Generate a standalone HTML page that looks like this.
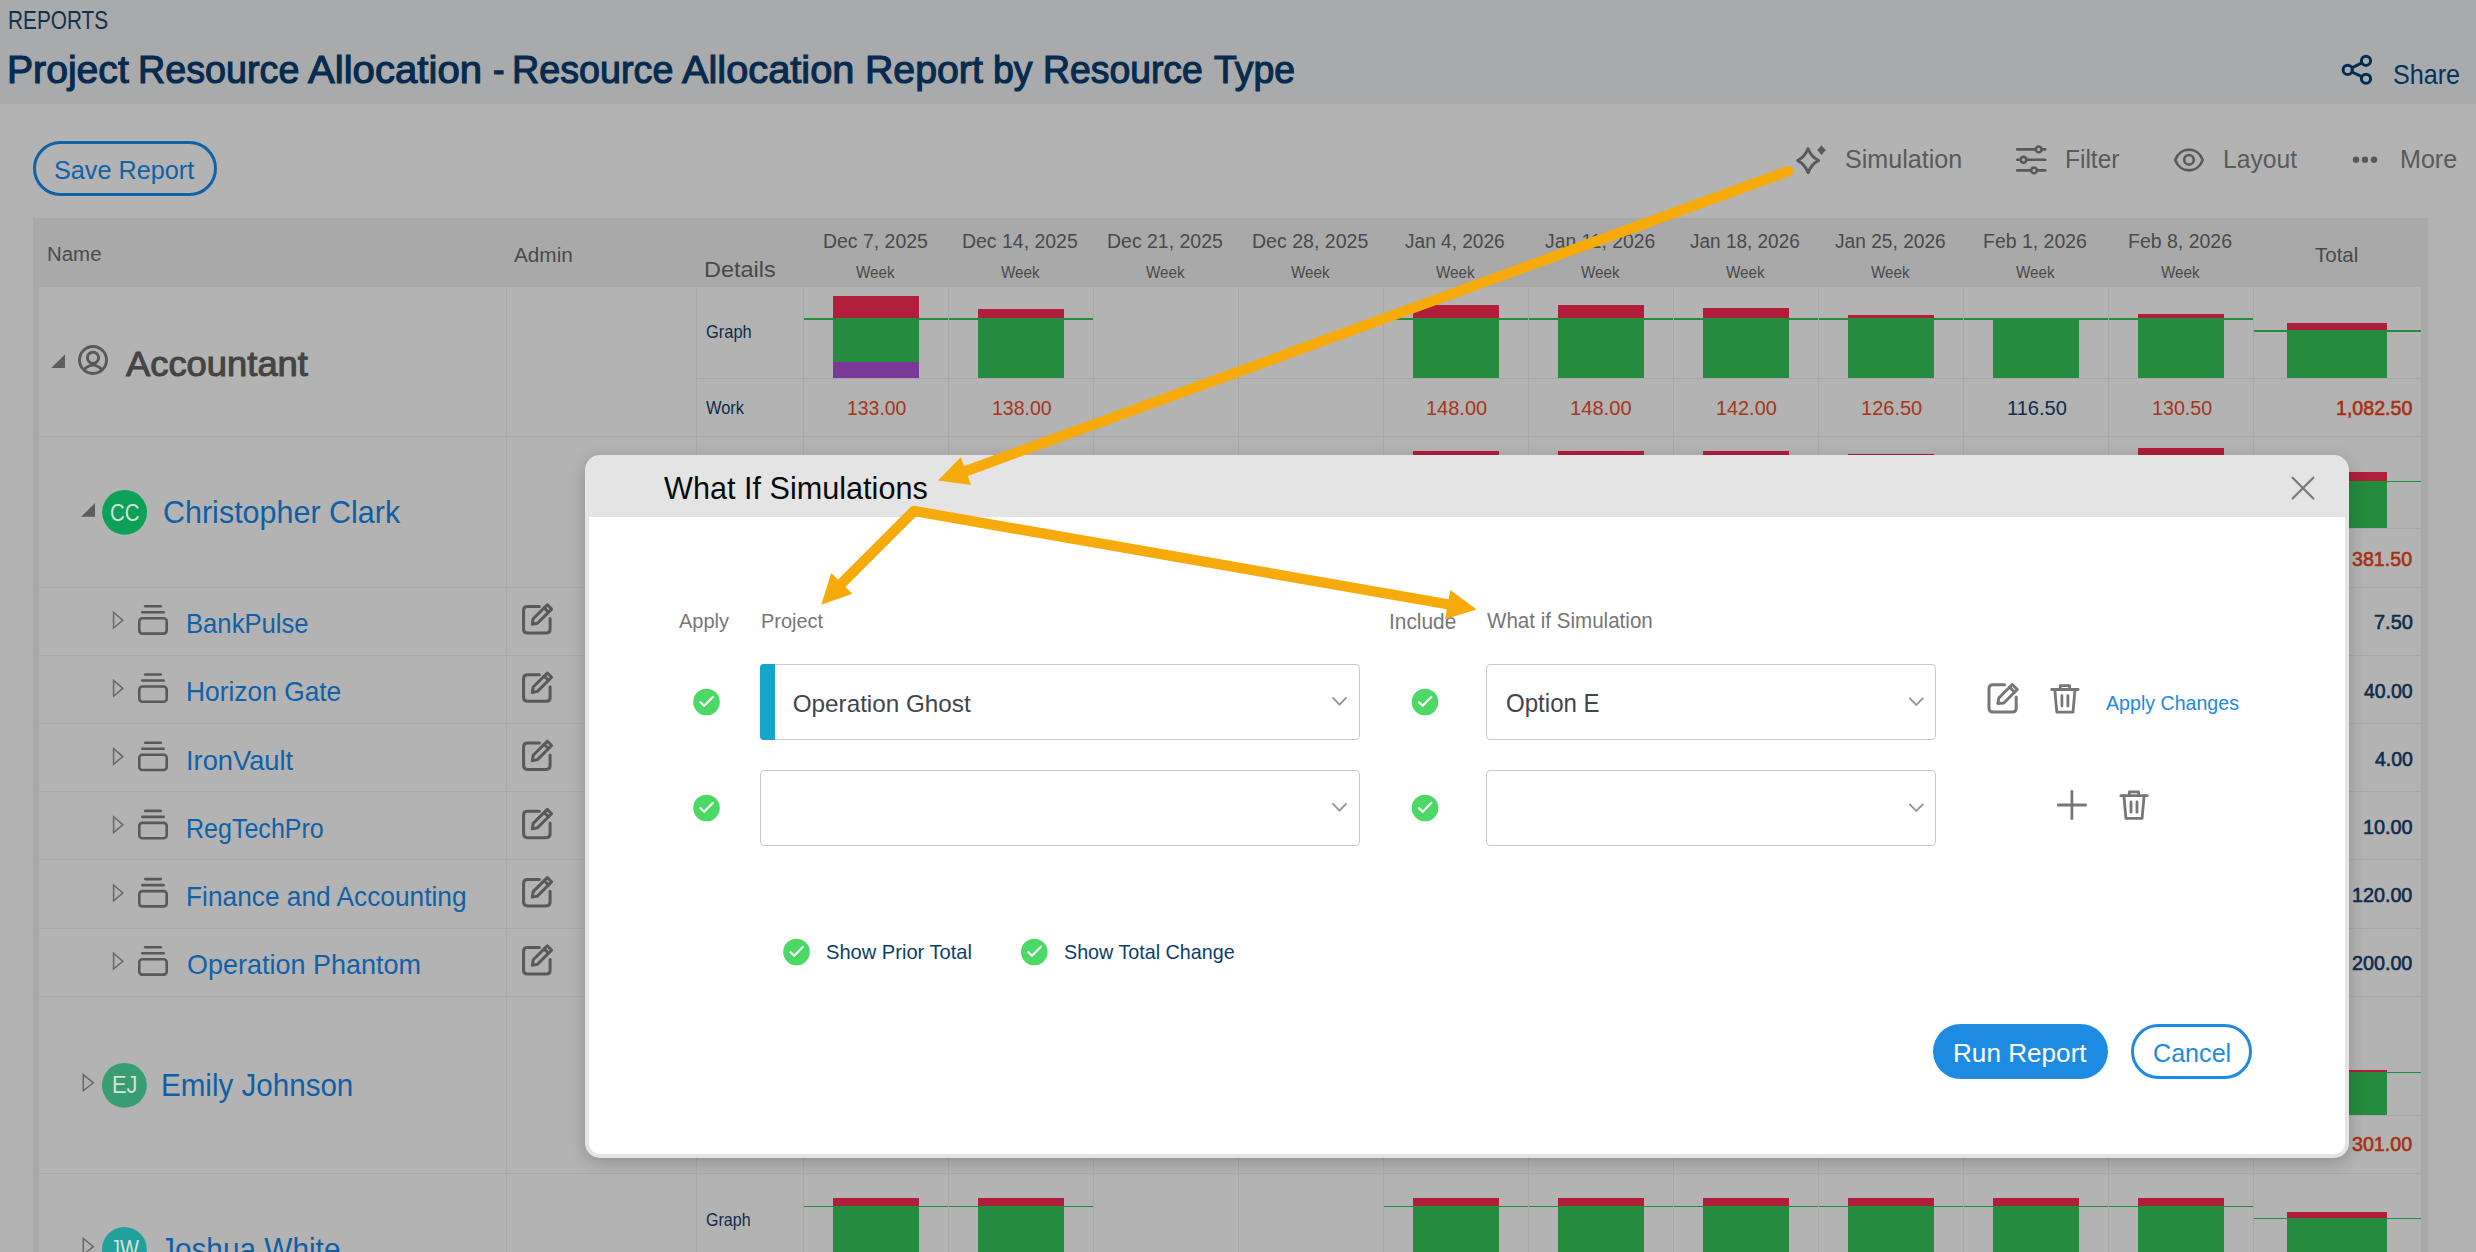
<!DOCTYPE html>
<html><head><meta charset="utf-8"><style>
html,body{margin:0;padding:0;}
body{width:2476px;height:1252px;overflow:hidden;position:relative;background:#b3b3b3;font-family:"Liberation Sans",sans-serif;}
.t{position:absolute;white-space:nowrap;transform-origin:0 0;}
.ov{position:absolute;left:0;top:0;}
</style></head><body>
<div style="position:absolute;left:0px;top:0px;width:2476px;height:104px;background:#a9aaac"></div><div style="position:absolute;left:33px;top:141px;width:184px;height:55px;box-sizing:border-box;border:3px solid #0f62a6;border-radius:28px"></div><div style="position:absolute;left:33px;top:218px;width:2395px;height:1100px;background:#a9a9a9"></div><div style="position:absolute;left:39px;top:287px;width:2382px;height:1000px;background:#b3b3b3"></div><div style="position:absolute;left:506px;top:287px;width:1px;height:1000px;background:#a8a8a8"></div><div style="position:absolute;left:696px;top:287px;width:1px;height:1000px;background:#a8a8a8"></div><div style="position:absolute;left:803px;top:287px;width:1px;height:1000px;background:#a8a8a8"></div><div style="position:absolute;left:948px;top:287px;width:1px;height:1000px;background:#a8a8a8"></div><div style="position:absolute;left:1093px;top:287px;width:1px;height:1000px;background:#a8a8a8"></div><div style="position:absolute;left:1238px;top:287px;width:1px;height:1000px;background:#a8a8a8"></div><div style="position:absolute;left:1383px;top:287px;width:1px;height:1000px;background:#a8a8a8"></div><div style="position:absolute;left:1528px;top:287px;width:1px;height:1000px;background:#a8a8a8"></div><div style="position:absolute;left:1673px;top:287px;width:1px;height:1000px;background:#a8a8a8"></div><div style="position:absolute;left:1818px;top:287px;width:1px;height:1000px;background:#a8a8a8"></div><div style="position:absolute;left:1963px;top:287px;width:1px;height:1000px;background:#a8a8a8"></div><div style="position:absolute;left:2108px;top:287px;width:1px;height:1000px;background:#a8a8a8"></div><div style="position:absolute;left:2253px;top:287px;width:1px;height:1000px;background:#a8a8a8"></div><div style="position:absolute;left:39px;top:436px;width:2382px;height:1px;background:#a8a8a8"></div><div style="position:absolute;left:39px;top:587px;width:2382px;height:1px;background:#a8a8a8"></div><div style="position:absolute;left:39px;top:655px;width:2382px;height:1px;background:#a8a8a8"></div><div style="position:absolute;left:39px;top:723px;width:2382px;height:1px;background:#a8a8a8"></div><div style="position:absolute;left:39px;top:791px;width:2382px;height:1px;background:#a8a8a8"></div><div style="position:absolute;left:39px;top:859px;width:2382px;height:1px;background:#a8a8a8"></div><div style="position:absolute;left:39px;top:928px;width:2382px;height:1px;background:#a8a8a8"></div><div style="position:absolute;left:39px;top:996px;width:2382px;height:1px;background:#a8a8a8"></div><div style="position:absolute;left:39px;top:1173px;width:2382px;height:1px;background:#a8a8a8"></div><div style="position:absolute;left:697px;top:378px;width:1724px;height:1px;background:#a8a8a8"></div><div style="position:absolute;left:697px;top:528px;width:1724px;height:1px;background:#a8a8a8"></div><div style="position:absolute;left:697px;top:1115px;width:1724px;height:1px;background:#a8a8a8"></div><div style="position:absolute;left:833px;top:296px;width:86px;height:22px;background:#b01e3a"></div><div style="position:absolute;left:833px;top:318px;width:86px;height:44px;background:#248b3f"></div><div style="position:absolute;left:833px;top:362px;width:86px;height:16px;background:#7a3899"></div><div style="position:absolute;left:978px;top:309px;width:86px;height:9px;background:#b01e3a"></div><div style="position:absolute;left:978px;top:318px;width:86px;height:60px;background:#248b3f"></div><div style="position:absolute;left:1413px;top:304.7px;width:86px;height:13.300000000000011px;background:#b01e3a"></div><div style="position:absolute;left:1413px;top:318px;width:86px;height:60px;background:#248b3f"></div><div style="position:absolute;left:1558px;top:304.7px;width:86px;height:13.300000000000011px;background:#b01e3a"></div><div style="position:absolute;left:1558px;top:318px;width:86px;height:60px;background:#248b3f"></div><div style="position:absolute;left:1703px;top:307.8px;width:86px;height:10.199999999999989px;background:#b01e3a"></div><div style="position:absolute;left:1703px;top:318px;width:86px;height:60px;background:#248b3f"></div><div style="position:absolute;left:1848px;top:314.9px;width:86px;height:3.1000000000000227px;background:#b01e3a"></div><div style="position:absolute;left:1848px;top:318px;width:86px;height:60px;background:#248b3f"></div><div style="position:absolute;left:1993px;top:318px;width:86px;height:60px;background:#248b3f"></div><div style="position:absolute;left:2138px;top:313.6px;width:86px;height:4.399999999999977px;background:#b01e3a"></div><div style="position:absolute;left:2138px;top:318px;width:86px;height:60px;background:#248b3f"></div><div style="position:absolute;left:804px;top:317.5px;width:144px;height:2px;background:#248b3f"></div><div style="position:absolute;left:949px;top:317.5px;width:144px;height:2px;background:#248b3f"></div><div style="position:absolute;left:1384px;top:317.5px;width:144px;height:2px;background:#248b3f"></div><div style="position:absolute;left:1529px;top:317.5px;width:144px;height:2px;background:#248b3f"></div><div style="position:absolute;left:1674px;top:317.5px;width:144px;height:2px;background:#248b3f"></div><div style="position:absolute;left:1819px;top:317.5px;width:144px;height:2px;background:#248b3f"></div><div style="position:absolute;left:1964px;top:317.5px;width:144px;height:2px;background:#248b3f"></div><div style="position:absolute;left:2109px;top:317.5px;width:144px;height:2px;background:#248b3f"></div><div style="position:absolute;left:2287px;top:322.9px;width:100px;height:7.100000000000023px;background:#b01e3a"></div><div style="position:absolute;left:2287px;top:330px;width:100px;height:48px;background:#248b3f"></div><div style="position:absolute;left:2254px;top:329.5px;width:167px;height:2px;background:#248b3f"></div><div style="position:absolute;left:1413px;top:451px;width:86px;height:19px;background:#b01e3a"></div><div style="position:absolute;left:1413px;top:470px;width:86px;height:58px;background:#248b3f"></div><div style="position:absolute;left:1558px;top:451px;width:86px;height:19px;background:#b01e3a"></div><div style="position:absolute;left:1558px;top:470px;width:86px;height:58px;background:#248b3f"></div><div style="position:absolute;left:1703px;top:451px;width:86px;height:19px;background:#b01e3a"></div><div style="position:absolute;left:1703px;top:470px;width:86px;height:58px;background:#248b3f"></div><div style="position:absolute;left:1848px;top:453.5px;width:86px;height:16.5px;background:#b01e3a"></div><div style="position:absolute;left:1848px;top:470px;width:86px;height:58px;background:#248b3f"></div><div style="position:absolute;left:2138px;top:447.7px;width:86px;height:22.30000000000001px;background:#b01e3a"></div><div style="position:absolute;left:2138px;top:470px;width:86px;height:58px;background:#248b3f"></div><div style="position:absolute;left:2287px;top:472px;width:100px;height:9px;background:#b01e3a"></div><div style="position:absolute;left:2287px;top:481px;width:100px;height:47px;background:#248b3f"></div><div style="position:absolute;left:2254px;top:481px;width:167px;height:1px;background:#248b3f"></div><div style="position:absolute;left:2287px;top:1069.7px;width:100px;height:2.599999999999909px;background:#b01e3a"></div><div style="position:absolute;left:2287px;top:1072.3px;width:100px;height:42.700000000000045px;background:#248b3f"></div><div style="position:absolute;left:2254px;top:1072px;width:167px;height:1px;background:#248b3f"></div><div style="position:absolute;left:833px;top:1197.5px;width:86px;height:8.299999999999955px;background:#b01e3a"></div><div style="position:absolute;left:833px;top:1205.8px;width:86px;height:94.20000000000005px;background:#248b3f"></div><div style="position:absolute;left:978px;top:1197.5px;width:86px;height:8.299999999999955px;background:#b01e3a"></div><div style="position:absolute;left:978px;top:1205.8px;width:86px;height:94.20000000000005px;background:#248b3f"></div><div style="position:absolute;left:1413px;top:1197.5px;width:86px;height:8.299999999999955px;background:#b01e3a"></div><div style="position:absolute;left:1413px;top:1205.8px;width:86px;height:94.20000000000005px;background:#248b3f"></div><div style="position:absolute;left:1558px;top:1197.5px;width:86px;height:8.299999999999955px;background:#b01e3a"></div><div style="position:absolute;left:1558px;top:1205.8px;width:86px;height:94.20000000000005px;background:#248b3f"></div><div style="position:absolute;left:1703px;top:1197.5px;width:86px;height:8.299999999999955px;background:#b01e3a"></div><div style="position:absolute;left:1703px;top:1205.8px;width:86px;height:94.20000000000005px;background:#248b3f"></div><div style="position:absolute;left:1848px;top:1197.5px;width:86px;height:8.299999999999955px;background:#b01e3a"></div><div style="position:absolute;left:1848px;top:1205.8px;width:86px;height:94.20000000000005px;background:#248b3f"></div><div style="position:absolute;left:1993px;top:1197.5px;width:86px;height:8.299999999999955px;background:#b01e3a"></div><div style="position:absolute;left:1993px;top:1205.8px;width:86px;height:94.20000000000005px;background:#248b3f"></div><div style="position:absolute;left:2138px;top:1197.5px;width:86px;height:8.299999999999955px;background:#b01e3a"></div><div style="position:absolute;left:2138px;top:1205.8px;width:86px;height:94.20000000000005px;background:#248b3f"></div><div style="position:absolute;left:804px;top:1205.5px;width:144px;height:1.5px;background:#248b3f"></div><div style="position:absolute;left:949px;top:1205.5px;width:144px;height:1.5px;background:#248b3f"></div><div style="position:absolute;left:1384px;top:1205.5px;width:144px;height:1.5px;background:#248b3f"></div><div style="position:absolute;left:1529px;top:1205.5px;width:144px;height:1.5px;background:#248b3f"></div><div style="position:absolute;left:1674px;top:1205.5px;width:144px;height:1.5px;background:#248b3f"></div><div style="position:absolute;left:1819px;top:1205.5px;width:144px;height:1.5px;background:#248b3f"></div><div style="position:absolute;left:1964px;top:1205.5px;width:144px;height:1.5px;background:#248b3f"></div><div style="position:absolute;left:2109px;top:1205.5px;width:144px;height:1.5px;background:#248b3f"></div><div style="position:absolute;left:2287px;top:1211.8px;width:100px;height:5.7999999999999545px;background:#b01e3a"></div><div style="position:absolute;left:2287px;top:1217.6px;width:100px;height:82.40000000000009px;background:#248b3f"></div><div style="position:absolute;left:2254px;top:1217.5px;width:167px;height:1px;background:#248b3f"></div>
<svg class="ov" width="2476" height="1252" viewBox="0 0 2476 1252"><g fill="none" stroke="#002c52" stroke-width="3"><circle cx="2366" cy="60.8" r="4.6"/><circle cx="2347.7" cy="69.9" r="4.6"/><circle cx="2366" cy="78.75" r="4.6"/><line x1="2351.8" y1="67.8" x2="2361.9" y2="62.9"/><line x1="2351.8" y1="72" x2="2361.9" y2="76.7"/></g><path d="M1808 148.8 Q1811.2 156.8 1818.6 160.5 Q1811.2 164.4 1808.1 172.6 Q1804.9 164.4 1797.7 160.5 Q1804.9 156.8 1808 148.8Z" fill="none" stroke="#595959" stroke-width="3" stroke-linejoin="round"/><path d="M1821.5 145.2 Q1823.4 147.9 1825.9 149.9 Q1823.4 152.2 1821.5 155.2 Q1819.6 152.2 1817.1 149.9 Q1819.6 147.9 1821.5 145.2Z" fill="#595959"/><g stroke="#595959" stroke-width="2.6" stroke-linecap="round" fill="none"><line x1="2017.2" y1="149.4" x2="2035.6" y2="149.4"/><line x1="2041.8" y1="149.4" x2="2045.2" y2="149.4"/><circle cx="2038.7" cy="149.4" r="2.9"/><line x1="2017.2" y1="159.8" x2="2020.4" y2="159.8"/><line x1="2026.6" y1="159.8" x2="2045.2" y2="159.8"/><circle cx="2023.5" cy="159.8" r="2.9"/><line x1="2017.2" y1="170.4" x2="2030.9" y2="170.4"/><line x1="2037.1" y1="170.4" x2="2045.2" y2="170.4"/><circle cx="2034" cy="170.4" r="2.9"/></g><g stroke="#595959" stroke-width="2.6" fill="none"><path d="M2175.3 160 C2180 146.2 2198 146.2 2202.7 160 C2198 173.8 2180 173.8 2175.3 160Z" stroke-linejoin="round"/><circle cx="2189" cy="159.8" r="4.8"/></g><circle cx="2356" cy="159.7" r="3.2" fill="#595959"/><circle cx="2365" cy="159.7" r="3.2" fill="#595959"/><circle cx="2374" cy="159.7" r="3.2" fill="#595959"/><path d="M51.2 368 L65 354.2 L65 368Z" fill="#5d5d5d"/><g fill="none" stroke="#595959" stroke-width="2.9"><circle cx="93" cy="360" r="13.5"/><circle cx="93" cy="357.8" r="5.6"/><path d="M84 369.8 Q93 360.5 102 369.8"/></g><path d="M81 516.8 L95 503.1 L95 516.8Z" fill="#5d5d5d"/><circle cx="124.6" cy="512.3" r="22.4" fill="#0ba257"/><path d="M113.6 612.2 L122.8 620.2 L113.6 628.0Z" fill="none" stroke="#686868" stroke-width="1.5" stroke-linejoin="miter"/><g fill="none" stroke="#595959" stroke-width="2.6" stroke-linecap="round"><rect x="139.3" y="618.3" width="27.4" height="15.3" rx="3"/><line x1="142.3" y1="612.3" x2="163.7" y2="612.3"/><line x1="145.2" y1="606.3" x2="160.8" y2="606.3"/></g><g fill="none" stroke="#595959" stroke-width="3" stroke-linecap="round" stroke-linejoin="round" transform="translate(0 0.0)"><path d="M539.4 606.6 H527.5 Q523.6 606.6 523.6 610.5 V629.2 Q523.6 633.1 527.5 633.1 H546.2 Q550.1 633.1 550.1 629.2 V618.5"/><path d="M532.3 624.3 L533.2 618.8 L547.3 604.8 L551.6 609.1 L537.5 623.2 Z"/><line x1="544.2" y1="607.9" x2="548.5" y2="612.2"/></g><path d="M113.6 680.4 L122.8 688.4 L113.6 696.2Z" fill="none" stroke="#686868" stroke-width="1.5" stroke-linejoin="miter"/><g fill="none" stroke="#595959" stroke-width="2.6" stroke-linecap="round"><rect x="139.3" y="686.5" width="27.4" height="15.3" rx="3"/><line x1="142.3" y1="680.5" x2="163.7" y2="680.5"/><line x1="145.2" y1="674.5" x2="160.8" y2="674.5"/></g><g fill="none" stroke="#595959" stroke-width="3" stroke-linecap="round" stroke-linejoin="round" transform="translate(0 68.2)"><path d="M539.4 606.6 H527.5 Q523.6 606.6 523.6 610.5 V629.2 Q523.6 633.1 527.5 633.1 H546.2 Q550.1 633.1 550.1 629.2 V618.5"/><path d="M532.3 624.3 L533.2 618.8 L547.3 604.8 L551.6 609.1 L537.5 623.2 Z"/><line x1="544.2" y1="607.9" x2="548.5" y2="612.2"/></g><path d="M113.6 748.6 L122.8 756.6 L113.6 764.4Z" fill="none" stroke="#686868" stroke-width="1.5" stroke-linejoin="miter"/><g fill="none" stroke="#595959" stroke-width="2.6" stroke-linecap="round"><rect x="139.3" y="754.7" width="27.4" height="15.3" rx="3"/><line x1="142.3" y1="748.7" x2="163.7" y2="748.7"/><line x1="145.2" y1="742.7" x2="160.8" y2="742.7"/></g><g fill="none" stroke="#595959" stroke-width="3" stroke-linecap="round" stroke-linejoin="round" transform="translate(0 136.4)"><path d="M539.4 606.6 H527.5 Q523.6 606.6 523.6 610.5 V629.2 Q523.6 633.1 527.5 633.1 H546.2 Q550.1 633.1 550.1 629.2 V618.5"/><path d="M532.3 624.3 L533.2 618.8 L547.3 604.8 L551.6 609.1 L537.5 623.2 Z"/><line x1="544.2" y1="607.9" x2="548.5" y2="612.2"/></g><path d="M113.6 816.8 L122.8 824.8 L113.6 832.6Z" fill="none" stroke="#686868" stroke-width="1.5" stroke-linejoin="miter"/><g fill="none" stroke="#595959" stroke-width="2.6" stroke-linecap="round"><rect x="139.3" y="822.9" width="27.4" height="15.3" rx="3"/><line x1="142.3" y1="816.9" x2="163.7" y2="816.9"/><line x1="145.2" y1="810.9" x2="160.8" y2="810.9"/></g><g fill="none" stroke="#595959" stroke-width="3" stroke-linecap="round" stroke-linejoin="round" transform="translate(0 204.6)"><path d="M539.4 606.6 H527.5 Q523.6 606.6 523.6 610.5 V629.2 Q523.6 633.1 527.5 633.1 H546.2 Q550.1 633.1 550.1 629.2 V618.5"/><path d="M532.3 624.3 L533.2 618.8 L547.3 604.8 L551.6 609.1 L537.5 623.2 Z"/><line x1="544.2" y1="607.9" x2="548.5" y2="612.2"/></g><path d="M113.6 885.0 L122.8 893.0 L113.6 900.8Z" fill="none" stroke="#686868" stroke-width="1.5" stroke-linejoin="miter"/><g fill="none" stroke="#595959" stroke-width="2.6" stroke-linecap="round"><rect x="139.3" y="891.1" width="27.4" height="15.3" rx="3"/><line x1="142.3" y1="885.1" x2="163.7" y2="885.1"/><line x1="145.2" y1="879.1" x2="160.8" y2="879.1"/></g><g fill="none" stroke="#595959" stroke-width="3" stroke-linecap="round" stroke-linejoin="round" transform="translate(0 272.8)"><path d="M539.4 606.6 H527.5 Q523.6 606.6 523.6 610.5 V629.2 Q523.6 633.1 527.5 633.1 H546.2 Q550.1 633.1 550.1 629.2 V618.5"/><path d="M532.3 624.3 L533.2 618.8 L547.3 604.8 L551.6 609.1 L537.5 623.2 Z"/><line x1="544.2" y1="607.9" x2="548.5" y2="612.2"/></g><path d="M113.6 953.2 L122.8 961.2 L113.6 969.0Z" fill="none" stroke="#686868" stroke-width="1.5" stroke-linejoin="miter"/><g fill="none" stroke="#595959" stroke-width="2.6" stroke-linecap="round"><rect x="139.3" y="959.3" width="27.4" height="15.3" rx="3"/><line x1="142.3" y1="953.3" x2="163.7" y2="953.3"/><line x1="145.2" y1="947.3" x2="160.8" y2="947.3"/></g><g fill="none" stroke="#595959" stroke-width="3" stroke-linecap="round" stroke-linejoin="round" transform="translate(0 341.0)"><path d="M539.4 606.6 H527.5 Q523.6 606.6 523.6 610.5 V629.2 Q523.6 633.1 527.5 633.1 H546.2 Q550.1 633.1 550.1 629.2 V618.5"/><path d="M532.3 624.3 L533.2 618.8 L547.3 604.8 L551.6 609.1 L537.5 623.2 Z"/><line x1="544.2" y1="607.9" x2="548.5" y2="612.2"/></g><path d="M83.3 1074.6 L93.3 1082.8 L83.3 1090.8Z" fill="none" stroke="#686868" stroke-width="1.5"/><circle cx="124.4" cy="1085.3" r="22.4" fill="#389d71"/><path d="M83.3 1238.5 L93.3 1246.7 L83.3 1254.7Z" fill="none" stroke="#686868" stroke-width="1.5"/><circle cx="124.4" cy="1249.4" r="22.4" fill="#22a09c"/></svg>
<div class="t" style="left:7.73px;top:9.49px;font-size:24.85px;line-height:24.85px;color:#10304f;transform:scaleX(0.8371);">REPORTS</div>
<div class="t" style="left:6.57px;top:51.25px;font-size:38.80px;line-height:38.80px;color:#062b4f;-webkit-text-stroke:1.16px #062b4f;transform:scaleX(1.0087);">Project</div>
<div class="t" style="left:138.48px;top:51.25px;font-size:38.80px;line-height:38.80px;color:#062b4f;-webkit-text-stroke:1.16px #062b4f;transform:scaleX(0.9717);">Resource</div>
<div class="t" style="left:308.20px;top:51.25px;font-size:38.80px;line-height:38.80px;color:#062b4f;-webkit-text-stroke:1.16px #062b4f;transform:scaleX(1.0345);">Allocation</div>
<div class="t" style="left:492.51px;top:51.25px;font-size:38.80px;line-height:38.80px;color:#062b4f;-webkit-text-stroke:1.16px #062b4f;transform:scaleX(0.8909);">-</div>
<div class="t" style="left:511.68px;top:51.25px;font-size:38.80px;line-height:38.80px;color:#062b4f;-webkit-text-stroke:1.16px #062b4f;transform:scaleX(0.9717);">Resource</div>
<div class="t" style="left:682.30px;top:51.25px;font-size:38.80px;line-height:38.80px;color:#062b4f;-webkit-text-stroke:1.16px #062b4f;transform:scaleX(1.0249);">Allocation</div>
<div class="t" style="left:864.66px;top:51.25px;font-size:38.80px;line-height:38.80px;color:#062b4f;-webkit-text-stroke:1.16px #062b4f;transform:scaleX(1.0117);">Report</div>
<div class="t" style="left:993.47px;top:51.25px;font-size:38.80px;line-height:38.80px;color:#062b4f;-webkit-text-stroke:1.16px #062b4f;transform:scaleX(0.9652);">by</div>
<div class="t" style="left:1043.41px;top:51.25px;font-size:38.80px;line-height:38.80px;color:#062b4f;-webkit-text-stroke:1.16px #062b4f;transform:scaleX(0.9624);">Resource</div>
<div class="t" style="left:1213.50px;top:51.25px;font-size:38.80px;line-height:38.80px;color:#062b4f;-webkit-text-stroke:1.16px #062b4f;transform:scaleX(0.9632);">Type</div>
<div class="t" style="left:2393.49px;top:60.85px;font-size:27.47px;line-height:27.47px;color:#00345c;transform:scaleX(0.9136);">Share</div>
<div class="t" style="left:54.04px;top:156.86px;font-size:26.16px;line-height:26.16px;color:#0f62a6;transform:scaleX(0.9647);">Save Report</div>
<div class="t" style="left:1845.41px;top:147.37px;font-size:25.44px;line-height:25.44px;color:#5a5a5a;transform:scaleX(0.9878);">Simulation</div>
<div class="t" style="left:2065.07px;top:147.37px;font-size:25.44px;line-height:25.44px;color:#5a5a5a;transform:scaleX(0.9627);">Filter</div>
<div class="t" style="left:2223.06px;top:147.37px;font-size:25.44px;line-height:25.44px;color:#5a5a5a;transform:scaleX(0.9689);">Layout</div>
<div class="t" style="left:2400.03px;top:147.37px;font-size:25.44px;line-height:25.44px;color:#5a5a5a;transform:scaleX(0.9855);">More</div>
<div class="t" style="left:46.77px;top:245.48px;font-size:19.91px;line-height:19.91px;color:#4a4a4a;transform:scaleX(1.0264);">Name</div>
<div class="t" style="left:514.30px;top:244.73px;font-size:20.64px;line-height:20.64px;color:#4a4a4a;transform:scaleX(1.0053);">Admin</div>
<div class="t" style="left:703.89px;top:259.44px;font-size:21.22px;line-height:21.22px;color:#4a4a4a;transform:scaleX(1.1067);">Details</div>
<div class="t" style="left:822.62px;top:232.05px;font-size:19.91px;line-height:19.91px;color:#4a4a4a;transform:scaleX(0.9767);">Dec 7, 2025</div>
<div class="t" style="left:856.00px;top:264.00px;font-size:17.15px;line-height:17.15px;color:#4a4a4a;transform:scaleX(0.8877);">Week</div>
<div class="t" style="left:962.02px;top:232.05px;font-size:19.91px;line-height:19.91px;color:#4a4a4a;transform:scaleX(0.9775);">Dec 14, 2025</div>
<div class="t" style="left:1001.00px;top:264.00px;font-size:17.15px;line-height:17.15px;color:#4a4a4a;transform:scaleX(0.8877);">Week</div>
<div class="t" style="left:1107.02px;top:232.05px;font-size:19.91px;line-height:19.91px;color:#4a4a4a;transform:scaleX(0.9783);">Dec 21, 2025</div>
<div class="t" style="left:1146.00px;top:264.00px;font-size:17.15px;line-height:17.15px;color:#4a4a4a;transform:scaleX(0.8877);">Week</div>
<div class="t" style="left:1252.02px;top:232.05px;font-size:19.91px;line-height:19.91px;color:#4a4a4a;transform:scaleX(0.9817);">Dec 28, 2025</div>
<div class="t" style="left:1291.00px;top:264.00px;font-size:17.15px;line-height:17.15px;color:#4a4a4a;transform:scaleX(0.8877);">Week</div>
<div class="t" style="left:1405.20px;top:232.05px;font-size:19.91px;line-height:19.91px;color:#4a4a4a;transform:scaleX(0.9580);">Jan 4, 2026</div>
<div class="t" style="left:1436.00px;top:264.00px;font-size:17.15px;line-height:17.15px;color:#4a4a4a;transform:scaleX(0.8877);">Week</div>
<div class="t" style="left:1544.70px;top:232.05px;font-size:19.91px;line-height:19.91px;color:#4a4a4a;transform:scaleX(0.9704);">Jan 11, 2026</div>
<div class="t" style="left:1581.00px;top:264.00px;font-size:17.15px;line-height:17.15px;color:#4a4a4a;transform:scaleX(0.8877);">Week</div>
<div class="t" style="left:1689.90px;top:232.05px;font-size:19.91px;line-height:19.91px;color:#4a4a4a;transform:scaleX(0.9536);">Jan 18, 2026</div>
<div class="t" style="left:1726.00px;top:264.00px;font-size:17.15px;line-height:17.15px;color:#4a4a4a;transform:scaleX(0.8877);">Week</div>
<div class="t" style="left:1834.60px;top:232.05px;font-size:19.91px;line-height:19.91px;color:#4a4a4a;transform:scaleX(0.9623);">Jan 25, 2026</div>
<div class="t" style="left:1871.00px;top:264.00px;font-size:17.15px;line-height:17.15px;color:#4a4a4a;transform:scaleX(0.8877);">Week</div>
<div class="t" style="left:1983.22px;top:232.05px;font-size:19.91px;line-height:19.91px;color:#4a4a4a;transform:scaleX(0.9774);">Feb 1, 2026</div>
<div class="t" style="left:2016.00px;top:264.00px;font-size:17.15px;line-height:17.15px;color:#4a4a4a;transform:scaleX(0.8877);">Week</div>
<div class="t" style="left:2128.02px;top:232.05px;font-size:19.91px;line-height:19.91px;color:#4a4a4a;transform:scaleX(0.9793);">Feb 8, 2026</div>
<div class="t" style="left:2161.00px;top:264.00px;font-size:17.15px;line-height:17.15px;color:#4a4a4a;transform:scaleX(0.8877);">Week</div>
<div class="t" style="left:2315.00px;top:245.05px;font-size:20.64px;line-height:20.64px;color:#4a4a4a;transform:scaleX(0.9934);">Total</div>
<div class="t" style="left:705.70px;top:322.62px;font-size:18.17px;line-height:18.17px;color:#0e2c4c;transform:scaleX(0.9055);">Graph</div>
<div class="t" style="left:705.70px;top:399.77px;font-size:17.88px;line-height:17.88px;color:#0e2c4c;transform:scaleX(0.9200);">Work</div>
<div class="t" style="left:847.06px;top:397.53px;font-size:20.64px;line-height:20.64px;color:#a5361a;transform:scaleX(0.9414);">133.00</div>
<div class="t" style="left:991.75px;top:397.53px;font-size:20.64px;line-height:20.64px;color:#a5361a;transform:scaleX(0.9462);">138.00</div>
<div class="t" style="left:1425.53px;top:397.53px;font-size:20.64px;line-height:20.64px;color:#a5361a;transform:scaleX(0.9690);">148.00</div>
<div class="t" style="left:1570.22px;top:397.53px;font-size:20.64px;line-height:20.64px;color:#a5361a;transform:scaleX(0.9771);">148.00</div>
<div class="t" style="left:1716.34px;top:397.53px;font-size:20.64px;line-height:20.64px;color:#a5361a;transform:scaleX(0.9625);">142.00</div>
<div class="t" style="left:1860.63px;top:397.53px;font-size:20.64px;line-height:20.64px;color:#a5361a;transform:scaleX(0.9706);">126.50</div>
<div class="t" style="left:2006.73px;top:397.53px;font-size:20.64px;line-height:20.64px;color:#0e2c4c;transform:scaleX(0.9720);">116.50</div>
<div class="t" style="left:2151.55px;top:397.53px;font-size:20.64px;line-height:20.64px;color:#a5361a;transform:scaleX(0.9543);">130.50</div>
<div class="t" style="left:2336.23px;top:397.80px;font-size:20.20px;line-height:20.20px;color:#a83010;-webkit-text-stroke:0.61px #a83010;transform:scaleX(0.9722);">1,082.50</div>
<div class="t" style="left:126.30px;top:346.54px;font-size:34.45px;line-height:34.45px;color:#444444;-webkit-text-stroke:1.03px #444444;transform:scaleX(1.0559);">Accountant</div>
<div class="t" style="left:162.52px;top:497.84px;font-size:30.96px;line-height:30.96px;color:#0f5fa6;transform:scaleX(0.9848);">Christopher Clark</div>
<div class="t" style="left:110.12px;top:502.45px;font-size:23.26px;line-height:23.26px;color:#d2e2d6;transform:scaleX(0.8808);">CC</div>
<div class="t" style="left:185.63px;top:610.05px;font-size:27.47px;line-height:27.47px;color:#1161a8;transform:scaleX(0.9338);">BankPulse</div>
<div class="t" style="left:185.58px;top:678.25px;font-size:27.47px;line-height:27.47px;color:#1161a8;transform:scaleX(0.9595);">Horizon Gate</div>
<div class="t" style="left:185.51px;top:747.08px;font-size:27.47px;line-height:27.47px;color:#1161a8;transform:scaleX(0.9927);">IronVault</div>
<div class="t" style="left:185.68px;top:814.65px;font-size:27.47px;line-height:27.47px;color:#1161a8;transform:scaleX(0.9115);">RegTechPro</div>
<div class="t" style="left:185.59px;top:882.85px;font-size:27.47px;line-height:27.47px;color:#1161a8;transform:scaleX(0.9569);">Finance and Accounting</div>
<div class="t" style="left:186.52px;top:951.05px;font-size:27.47px;line-height:27.47px;color:#1161a8;transform:scaleX(0.9817);">Operation Phantom</div>
<div class="t" style="left:2373.53px;top:612.06px;font-size:20.49px;line-height:20.49px;color:#0e2c4c;-webkit-text-stroke:0.61px #0e2c4c;transform:scaleX(0.9746);">7.50</div>
<div class="t" style="left:2363.70px;top:680.80px;font-size:20.49px;line-height:20.49px;color:#0e2c4c;-webkit-text-stroke:0.61px #0e2c4c;transform:scaleX(0.9495);">40.00</div>
<div class="t" style="left:2374.50px;top:749.18px;font-size:20.49px;line-height:20.49px;color:#0e2c4c;-webkit-text-stroke:0.61px #0e2c4c;transform:scaleX(0.9499);">4.00</div>
<div class="t" style="left:2362.73px;top:816.66px;font-size:20.49px;line-height:20.49px;color:#0e2c4c;-webkit-text-stroke:0.61px #0e2c4c;transform:scaleX(0.9685);">10.00</div>
<div class="t" style="left:2352.04px;top:884.86px;font-size:20.49px;line-height:20.49px;color:#0e2c4c;-webkit-text-stroke:0.61px #0e2c4c;transform:scaleX(0.9631);">120.00</div>
<div class="t" style="left:2352.04px;top:953.06px;font-size:20.49px;line-height:20.49px;color:#0e2c4c;-webkit-text-stroke:0.61px #0e2c4c;transform:scaleX(0.9631);">200.00</div>
<div class="t" style="left:2352.00px;top:548.82px;font-size:20.06px;line-height:20.06px;color:#a83010;-webkit-text-stroke:0.60px #a83010;transform:scaleX(0.9809);">381.50</div>
<div class="t" style="left:161.17px;top:1069.29px;font-size:32.27px;line-height:32.27px;color:#0f5fa6;transform:scaleX(0.9166);">Emily Johnson</div>
<div class="t" style="left:112.06px;top:1073.81px;font-size:23.26px;line-height:23.26px;color:#d2e2d6;transform:scaleX(0.9385);">EJ</div>
<div class="t" style="left:2352.00px;top:1135.48px;font-size:19.91px;line-height:19.91px;color:#a83010;-webkit-text-stroke:0.60px #a83010;transform:scaleX(0.9866);">301.00</div>
<div class="t" style="left:159.50px;top:1234.70px;font-size:30.96px;line-height:30.96px;color:#0f5fa6;transform:scaleX(0.9623);">Joshua White</div>
<div class="t" style="left:110.00px;top:1237.81px;font-size:23.26px;line-height:23.26px;color:#d2e2d6;transform:scaleX(0.8625);">JW</div>
<div class="t" style="left:706.00px;top:1212.14px;font-size:17.44px;line-height:17.44px;color:#0e2c4c;transform:scaleX(0.9212);">Graph</div>
<div style="position:absolute;left:585px;top:455px;width:1764px;height:703px;background:#e4e4e4;border-radius:15px;box-shadow:0 4px 16px rgba(0,0,0,0.2)"></div><div style="position:absolute;left:589px;top:517px;width:1756px;height:637px;background:#ffffff;border-radius:0 0 11px 11px"></div><div style="position:absolute;left:760px;top:664px;width:600px;height:76px;box-sizing:border-box;border:1.5px solid #c9c9c9;border-radius:4px;background:#fff"></div><div style="position:absolute;left:760px;top:664px;width:15px;height:76px;background:#17a5c9;border-radius:4px 0 0 4px"></div><div style="position:absolute;left:760px;top:770px;width:600px;height:76px;box-sizing:border-box;border:1.5px solid #c9c9c9;border-radius:4px;background:#fff"></div><div style="position:absolute;left:1486px;top:664px;width:450px;height:76px;box-sizing:border-box;border:1.5px solid #c9c9c9;border-radius:4px;background:#fff"></div><div style="position:absolute;left:1486px;top:770px;width:450px;height:76px;box-sizing:border-box;border:1.5px solid #c9c9c9;border-radius:4px;background:#fff"></div>
<div style="position:absolute;left:1933px;top:1024px;width:175px;height:55px;background:#1e8be3;border-radius:28px"></div><div style="position:absolute;left:2131px;top:1024px;width:121px;height:55px;box-sizing:border-box;border:3px solid #1e8be3;border-radius:28px"></div>
<svg class="ov" width="2476" height="1252" viewBox="0 0 2476 1252"><g stroke="#7b7b7b" stroke-width="2.3" stroke-linecap="round"><line x1="2292.6" y1="477.8" x2="2313.3" y2="498.5"/><line x1="2313.3" y1="477.8" x2="2292.6" y2="498.5"/></g><path d="M1332.5 697.4 L1339.5 704.6 L1346.5 697.4" fill="none" stroke="#959595" stroke-width="1.8"/><path d="M1909.3 697.8 L1916.3 705.0 L1923.3 697.8" fill="none" stroke="#959595" stroke-width="1.8"/><path d="M1332.5 803.4 L1339.5 810.6 L1346.5 803.4" fill="none" stroke="#959595" stroke-width="1.8"/><path d="M1909.3 803.8 L1916.3 811.0 L1923.3 803.8" fill="none" stroke="#959595" stroke-width="1.8"/><circle cx="706.5" cy="702" r="13.3" fill="#4bd865"/><path d="M700.5 702.2 L704.2 705.8 L712.8 696.9" fill="none" stroke="#fff" stroke-width="2.2" stroke-linecap="round" stroke-linejoin="round"/><circle cx="1425" cy="702" r="13.3" fill="#4bd865"/><path d="M1419.0 702.2 L1422.7 705.8 L1431.3 696.9" fill="none" stroke="#fff" stroke-width="2.2" stroke-linecap="round" stroke-linejoin="round"/><circle cx="706.5" cy="808" r="13.3" fill="#4bd865"/><path d="M700.5 808.2 L704.2 811.8 L712.8 802.9" fill="none" stroke="#fff" stroke-width="2.2" stroke-linecap="round" stroke-linejoin="round"/><circle cx="1425" cy="808" r="13.3" fill="#4bd865"/><path d="M1419.0 808.2 L1422.7 811.8 L1431.3 802.9" fill="none" stroke="#fff" stroke-width="2.2" stroke-linecap="round" stroke-linejoin="round"/><circle cx="796.5" cy="952" r="13.3" fill="#4bd865"/><path d="M790.5 952.2 L794.2 955.8 L802.8 946.9" fill="none" stroke="#fff" stroke-width="2.2" stroke-linecap="round" stroke-linejoin="round"/><circle cx="1034.3" cy="952" r="13.3" fill="#4bd865"/><path d="M1028.3 952.2 L1032.0 955.8 L1040.6 946.9" fill="none" stroke="#fff" stroke-width="2.2" stroke-linecap="round" stroke-linejoin="round"/><g fill="none" stroke="#777777" stroke-width="3" stroke-linecap="round" stroke-linejoin="round"><path d="M2004.5 684.8 H1993 Q1989 684.8 1989 688.8 V708 Q1989 712 1993 712 H2012.2 Q2016.2 712 2016.2 708 V697"/><path d="M1997.8 703.4 L1998.8 698 L2012.3 684.5 L2017.3 689.5 L2003.8 703 Z"/><line x1="2009.6" y1="687.2" x2="2014.6" y2="692.2"/></g><g fill="none" stroke="#777777" stroke-width="2.8" stroke-linecap="round" stroke-linejoin="round"><line x1="2051.7" y1="689.5" x2="2078.1" y2="689.5"/><path d="M2060.3 689.5 V685.6 H2069.5 V689.5"/><path d="M2054.8 689.5 L2056.8 712.2 H2073.0 L2075.0 689.5"/><line x1="2061.9" y1="695.7" x2="2061.9" y2="706.0"/><line x1="2067.9" y1="695.7" x2="2067.9" y2="706.0"/></g><g fill="none" stroke="#777777" stroke-width="2.8" stroke-linecap="round" stroke-linejoin="round"><line x1="2120.8" y1="795.7" x2="2147.2" y2="795.7"/><path d="M2129.4 795.7 V791.8 H2138.6 V795.7"/><path d="M2123.9 795.7 L2125.9 818.4 H2142.1 L2144.1 795.7"/><line x1="2131.0" y1="801.9" x2="2131.0" y2="812.2"/><line x1="2137.0" y1="801.9" x2="2137.0" y2="812.2"/></g><g stroke="#777777" stroke-width="2.8" stroke-linecap="round"><line x1="2071.9" y1="791.3" x2="2071.9" y2="818.7"/><line x1="2058.2" y1="805" x2="2085.6" y2="805"/></g></svg>
<div class="t" style="left:664.40px;top:472.52px;font-size:31.40px;line-height:31.40px;color:#0a0a0a;transform:scaleX(0.9755);">What If Simulations</div>
<div class="t" style="left:679.20px;top:610.76px;font-size:20.49px;line-height:20.49px;color:#777777;transform:scaleX(0.9769);">Apply</div>
<div class="t" style="left:760.63px;top:610.76px;font-size:20.49px;line-height:20.49px;color:#777777;transform:scaleX(0.9736);">Project</div>
<div class="t" style="left:1389.05px;top:610.78px;font-size:22.53px;line-height:22.53px;color:#777777;transform:scaleX(0.9275);">Include</div>
<div class="t" style="left:1487.10px;top:610.21px;font-size:22.53px;line-height:22.53px;color:#777777;transform:scaleX(0.9137);">What if Simulation</div>
<div class="t" style="left:792.70px;top:691.86px;font-size:24.27px;line-height:24.27px;color:#40464e;">Operation Ghost</div>
<div class="t" style="left:1505.76px;top:690.55px;font-size:25.58px;line-height:25.58px;color:#40464e;transform:scaleX(0.9408);">Option E</div>
<div class="t" style="left:2106.40px;top:693.12px;font-size:20.78px;line-height:20.78px;color:#2189e0;transform:scaleX(0.9441);">Apply Changes</div>
<div class="t" style="left:825.80px;top:942.05px;font-size:20.64px;line-height:20.64px;color:#0d3d6e;transform:scaleX(0.9747);">Show Prior Total</div>
<div class="t" style="left:1063.70px;top:942.05px;font-size:20.64px;line-height:20.64px;color:#0d3d6e;transform:scaleX(0.9563);">Show Total Change</div>
<div class="t" style="left:1953.23px;top:1040.59px;font-size:25.29px;line-height:25.29px;color:#ffffff;transform:scaleX(1.0333);">Run Report</div>
<div class="t" style="left:2153.01px;top:1040.59px;font-size:25.29px;line-height:25.29px;color:#1e8be3;transform:scaleX(0.9937);">Cancel</div>
<svg class="ov" width="2476" height="1252" viewBox="0 0 2476 1252"><g fill="none" stroke="#f7ab0b" stroke-width="10.4" stroke-linecap="round" stroke-linejoin="round"><line x1="1788" y1="171.2" x2="962" y2="472.5"/><polyline points="836,589 914,511 1452,605"/></g><g fill="#f7ab0b"><path d="M938 480.5 L960.7 457.2 L971.1 485Z"/><path d="M821.3 604.7 L831.2 573.1 L852.4 593.8Z"/><path d="M1476.6 609.4 L1450.3 590.1 L1445 619.2Z"/></g></svg>
</body></html>
